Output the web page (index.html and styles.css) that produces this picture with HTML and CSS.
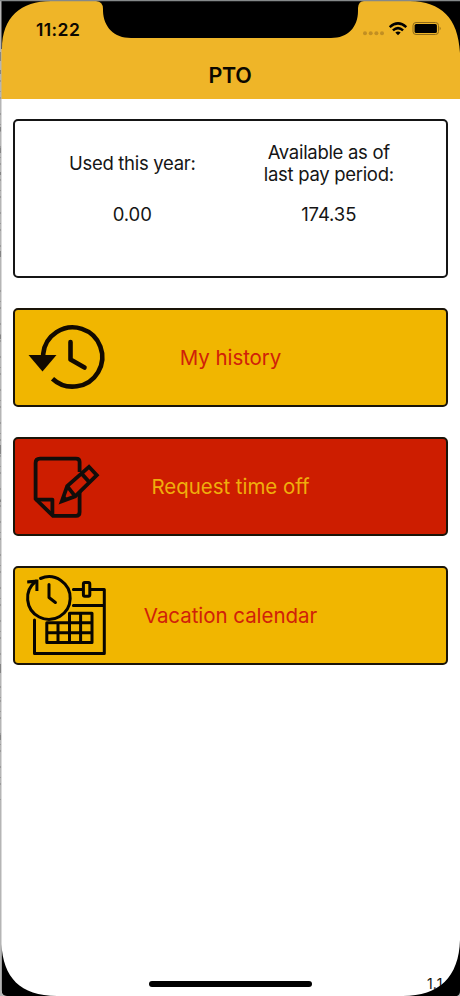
FILE: index.html
```
<!DOCTYPE html>
<html lang="en">
<head>
  <meta charset="UTF-8" />
  <meta name="viewport" content="width=device-width, initial-scale=1.0" />
  <title>PTO</title>
  <link rel="stylesheet" href="styles.css">
</head>
<body>
<div class="phone">
  <header class="header">
    <div class="status-bar">
      <span class="time">11:22</span>
      <svg class="status-icons" width="80" height="16" viewBox="0 0 80 16">
        <g fill="#c28f22">
          <circle cx="4" cy="12.3" r="2" /><circle cx="9.7" cy="12.3" r="2" />
          <circle cx="15.4" cy="12.3" r="2" /><circle cx="21" cy="12.3" r="2" />
        </g>
        <g fill="none" stroke="#000" stroke-width="2.5">
          <path d="M28.7 6.1Q37 -1.3 45.3 6.1" />
          <path d="M31.9 9.4Q37 4.8 42.1 9.4" />
        </g>
        <path d="M34.3 11.5Q37 9.4 39.7 11.5L37 14.3Z" />
        <rect x="52" y="1.5" width="25.5" height="12" rx="3" fill="none" stroke="#8f6a19" />
        <rect x="53.6" y="2.9" width="22.3" height="9.2" rx="1.6" />
        <path d="M78.7 5.5Q80.5 7.3 78.7 9.5Z" fill="#8f6a19" />
      </svg>
    </div>
    <h1 class="title">PTO</h1>
  </header>

  <main class="content">
    <section class="summary">
      <div class="stat">
        <div class="stat-label">Used this year:</div>
        <div class="stat-value">0.00</div>
      </div>
      <div class="stat">
        <div class="stat-label">Available as of<br>last pay period:</div>
        <div class="stat-value">174.35</div>
      </div>
    </section>

    <button class="card">
      <svg class="card-icon" viewBox="0 0 98 98">
        <path d="M28.2 47V45A29.6 29.6 0 1 1 37.5 69.7" fill="none" stroke="#120a00" stroke-width="4.6" />
        <path d="M13.5 46H41.5L27.5 62.5Z" fill="#120a00" />
        <path d="M55.5 33V50.5L69.5 58.5" fill="none" stroke="#120a00" stroke-width="4.6" stroke-linecap="round" stroke-linejoin="round" />
      </svg>
      <span class="card-text">My history</span>
    </button>

    <button class="card card-red">
      <svg class="card-icon" viewBox="0 0 98 98" fill="none" stroke="#120d0a" stroke-width="3.8" stroke-linejoin="round">
        <path d="M64.6 34V24Q64.6 20.6 61 20.6H25Q20.6 20.6 20.6 25V61L38 77.9H61Q64.6 77.9 64.6 74V54" />
        <path d="M20.6 61.6H37.4V77" />
        <path d="M46.8 63.4L52.2 48.2L74 28.8L81.8 37.2L60.2 58.4Z" stroke-linejoin="miter" />
        <path d="M52.2 48.2L60.2 58.4M66.4 35.4L74.4 44.2" />
        <path d="M46 64.2L49 57L53.4 61.4Z" fill="#120d0a" stroke="none" />
      </svg>
      <span class="card-text">Request time off</span>
    </button>

    <button class="card">
      <svg class="card-icon" viewBox="0 0 98 98" fill="none" stroke="#080500" stroke-width="3" stroke-linecap="round" stroke-linejoin="round">
        <path d="M25.5 11.5A21.3 21.3 0 1 1 20.9 14.2" />
        <path d="M13.7 14.8L21.9 14.2V22.5" stroke-linecap="square" stroke-linejoin="miter" />
        <path d="M34 17.5V30.5L40.4 35.5" />
        <path d="M58.4 22.5H67.5M76 22.5H89.3V86.5H19.5V53M58.4 38.6H88" />
        <rect x="68.4" y="15.6" width="6.4" height="13.6" rx="1.4" />
        <path d="M31.8 55.8H54.5V46.2H77V75.6H31.8ZM31.8 65.8H77M54.5 55.8H77M43 55.8V75.6M54.5 55.8V75.6M65.6 46.2V75.6" />
      </svg>
      <span class="card-text">Vacation calendar</span>
    </button>
  </main>

  <span class="version">1.1</span>
  <div class="home-bar"></div>

  <!-- device frame: notch and rounded corners -->
  <svg class="bezel" width="460" height="996" viewBox="0 0 460 996">
    <path d="M96 1Q103 1.5 103 9V11C103.5 27 114 38 131 38H331C348 38 358 27 358 11V8Q358.5 1 364 1Z" />
    <path d="M1 1H51C21 1 2 17 2 49H1Z" />
    <path d="M410 1H460V53C458 17 441 2 410 1Z" />
    <path d="M1.5 944C3 977 20 996 57 996H7Q1.5 996 1.5 990Z" />
    <path d="M460 940C459 977 439 996 403 996H460Z" />
    <path d="M457 996Q460 995 460 991V996Z" fill="#bbb" />
    <path d="M0 996V0H1.5V990Q1.5 996 7 996Z" fill="#b5b5b5" />
    <path d="M0 0H460V1.3H0Z" fill="#85898a" />
    <path d="M0 52V61M0 70V74M0 127V131M0 148V153M0 172V175M0 251V257M0 335V339M0 445V454M0 500V502M0 664V673M0 735V740" stroke="#555" />
    <path d="M0 80V250M0 290V700M0 700V800" stroke="#808080" stroke-dasharray="2 9 1 5 2 14" />
  </svg>
</div>
</body>
</html>
```
FILE: styles.css
```
* {
  box-sizing: border-box;
}
body {
  margin: 0;
  font-family: Inter, "Liberation Sans", sans-serif;
  background: #fff;
  color: #151515;
}
.phone {
  position: relative;
  width: 460px;
  height: 996px;
  overflow: hidden;
  background: #fff;
}
.header {
  height: 99px;
  background: #efb528;
  color: #0c0800;
}
.status-bar {
  display: flex;
  justify-content: space-between;
  align-items: center;
  height: 58px;
  padding: 0 19px 0 36px;
}
.time {
  font-size: 17.5px;
  font-weight: 600;
  letter-spacing: 0.4px;
}
.status-icons {
  display: block;
}
.title {
  margin: 5px 0 0;
  font-size: 21.5px;
  line-height: 24px;
  font-weight: 600;
  letter-spacing: -0.3px;
  text-align: center;
}
.content {
  display: flex;
  flex-direction: column;
  gap: 30px;
  padding: 20px 12px 0 13px;
}
.summary {
  display: grid;
  grid-template-columns: 1fr 1fr;
  height: 159px;
  padding: 20px 19px;
  border: 2px solid #151515;
  border-radius: 5px;
  font-size: 18.5px;
  line-height: 22px;
  letter-spacing: -0.3px;
  text-align: center;
}
.stat-label {
  display: flex;
  align-items: center;
  justify-content: center;
  height: 44px;
}
.stat-value {
  margin-top: 18px;
  letter-spacing: -0.1px;
}
.card {
  display: grid;
  align-items: center;
  width: 100%;
  height: 99px;
  padding: 0;
  border: 2px solid #1a1408;
  border-radius: 5px;
  background: #f1b600;
  color: #d02109;
  font-family: inherit;
  font-size: 20.5px;
  letter-spacing: -0.05px;
}
.card-icon,
.card-text {
  grid-area: 1 / 1;
}
.card-icon {
  width: 98px;
  height: 98px;
  margin: -1.5px 0 0 -0.5px;
}
.card-text {
  padding-bottom: 2px;
  text-align: center;
}
.card-red {
  background: #cd1d00;
  color: #f0ae0c;
}
.version {
  position: absolute;
  left: 427px;
  top: 975px;
  font-size: 14px;
  line-height: 18px;
  font-kerning: none;
}
.home-bar {
  position: absolute;
  left: 149px;
  bottom: 9px;
  width: 163px;
  height: 6px;
  border-radius: 3px;
  background: #000;
}
.bezel {
  position: absolute;
  left: 0;
  top: 0;
}
```
